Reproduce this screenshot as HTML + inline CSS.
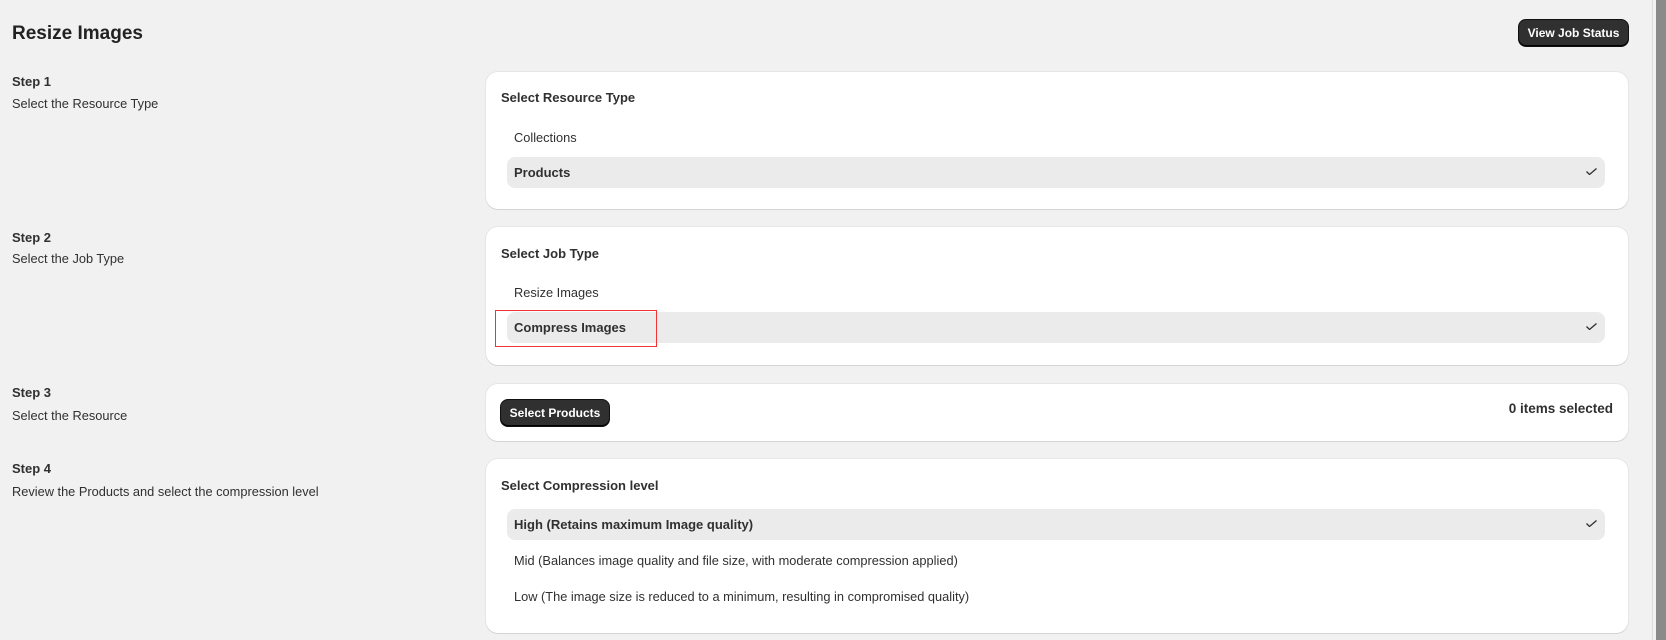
<!DOCTYPE html><html><head><style>
*{box-sizing:border-box;margin:0;padding:0}
body{width:1666px;height:640px;background:#f1f1f1;font-family:"Liberation Sans",sans-serif;color:#303030;position:relative;overflow:hidden;font-size:13px}
.a{position:absolute;white-space:nowrap}
.b{font-weight:bold}
.s{font-size:12.8px}
.card{position:absolute;left:486px;width:1142px;background:#fff;border-radius:12px;box-shadow:0 1px 0 #d4d4d4,0 0 0 1px #e6e6e6}
.row{position:absolute;left:21px;width:1098px;height:31px;background:#ebebeb;border-radius:8px}
.row span{position:absolute;left:7px;top:8px;font-weight:bold}
.ck{position:absolute;right:8px;top:11px;width:11px;height:7px}
.btn{position:absolute;background:#303030;color:#fff;font-weight:bold;font-size:12px;border-radius:7px;text-align:center;box-shadow:inset 0 -1px 0 #000,0 0 0 1px #111}
</style></head><body>
<div class="a b" style="left:12px;top:23px;font-size:19px;color:#222">Resize Images</div>
<div class="btn" style="left:1519px;top:20px;width:109px;height:26px;line-height:26px">View Job Status</div>
<div class="a" style="left:1652px;top:0;width:1px;height:640px;background:#ddd"></div>
<div class="a" style="left:1656px;top:0;width:10px;height:640px;background:#8a8a8a"></div>

<div class="a b" style="left:12px;top:74px">Step 1</div>
<div class="a s" style="left:12px;top:96px">Select the Resource Type</div>
<div class="a b" style="left:12px;top:230px">Step 2</div>
<div class="a s" style="left:12px;top:251px">Select the Job Type</div>
<div class="a b" style="left:12px;top:385px">Step 3</div>
<div class="a s" style="left:12px;top:408px">Select the Resource</div>
<div class="a b" style="left:12px;top:461px">Step 4</div>
<div class="a s" style="left:12px;top:484px">Review the Products and select the compression level</div>

<div class="card" style="top:72px;height:137px">
<div class="a b" style="left:15px;top:18px">Select Resource Type</div>
<div class="a s" style="left:28px;top:58px">Collections</div>
<div class="row" style="top:85px"><span>Products</span><svg class="ck" viewBox="0 0 11 7"><path d="M0.5 3.5L3.5 6.5L10.5 0.5" fill="none" stroke="#303030" stroke-width="1.3"/></svg></div>
</div>

<div class="card" style="top:227px;height:138px">
<div class="a b" style="left:15px;top:19px">Select Job Type</div>
<div class="a s" style="left:28px;top:58px">Resize Images</div>
<div class="row" style="top:85px"><span>Compress Images</span><svg class="ck" viewBox="0 0 11 7"><path d="M0.5 3.5L3.5 6.5L10.5 0.5" fill="none" stroke="#303030" stroke-width="1.3"/></svg></div>
</div>
<div class="a" style="left:495px;top:310px;width:162px;height:37px;border:1.5px solid #e33"></div>

<div class="card" style="top:384px;height:57px">
<div class="btn" style="left:15px;top:16px;width:108px;height:26px;line-height:26px">Select Products</div>
<div class="a b" style="right:15px;top:17px;font-size:13.5px">0 items selected</div>
</div>

<div class="card" style="top:459px;height:174px">
<div class="a b" style="left:15px;top:19px">Select Compression level</div>
<div class="row" style="top:50px"><span>High (Retains maximum Image quality)</span><svg class="ck" viewBox="0 0 11 7"><path d="M0.5 3.5L3.5 6.5L10.5 0.5" fill="none" stroke="#303030" stroke-width="1.3"/></svg></div>
<div class="a s" style="left:28px;top:94px">Mid (Balances image quality and file size, with moderate compression applied)</div>
<div class="a s" style="left:28px;top:130px">Low (The image size is reduced to a minimum, resulting in compromised quality)</div>
</div>
</body></html>
